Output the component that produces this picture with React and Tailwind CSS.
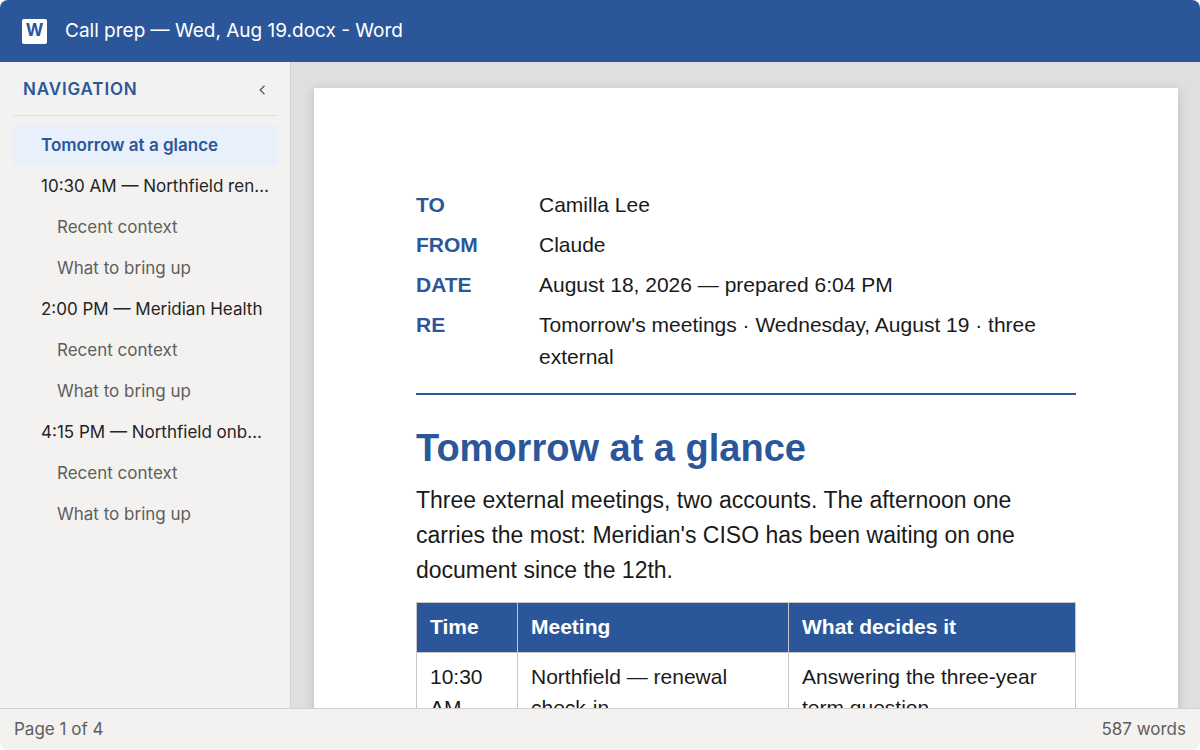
import React from "react";

const outline = [
  { id: "glance", level: 1, label: "Tomorrow at a glance" },
  { id: "renewal", level: 1, label: "10:30 AM — Northfield renewal check-in" },
  { id: "renewal-context", level: 2, label: "Recent context" },
  { id: "renewal-bring", level: 2, label: "What to bring up" },
  { id: "meridian", level: 1, label: "2:00 PM — Meridian Health" },
  { id: "meridian-context", level: 2, label: "Recent context" },
  { id: "meridian-bring", level: 2, label: "What to bring up" },
  { id: "onboarding", level: 1, label: "4:15 PM — Northfield onboarding" },
  { id: "onboarding-context", level: 2, label: "Recent context" },
  { id: "onboarding-bring", level: 2, label: "What to bring up" },
];

const memo = [
  ["TO", "Camilla Lee"],
  ["FROM", "Claude"],
  ["DATE", "August 18, 2026 — prepared 6:04 PM"],
  ["RE", "Tomorrow's meetings · Wednesday, August 19 · three external"],
];

const meetings = [
  ["10:30 AM", "Northfield — renewal check-in", "Answering the three-year term question"],
];

const TitleBar = () => (
  <header className="flex h-[62px] shrink-0 items-center gap-[18px] bg-[#2b579a] px-[22px] text-white">
    <span className="flex size-[25px] items-center justify-center rounded-xs bg-white text-[17px] font-bold text-[#2b579a]">
      W
    </span>
    <h1 className="text-[19px] leading-8">Call prep — Wed, Aug 19.docx - Word</h1>
  </header>
);

const NavItem = ({ item, active }) => {
  const tone = active
    ? "bg-[#e8f0fb] pl-7 font-semibold text-[#2b579a]"
    : item.level === 1
      ? "pl-7 text-[#252423]"
      : "pl-11 text-[#605e5c]";

  return (
    <li>
      <a href={`#${item.id}`} className={`block h-10 truncate pr-1.5 text-[17px] leading-10 ${tone}`}>
        {item.label}
      </a>
    </li>
  );
};

const Sidebar = () => (
  <nav
    aria-label="Navigation"
    className="w-[291px] shrink-0 overflow-hidden border-r border-[#d2d0ce] bg-[#f3f2f1] px-[13px]"
  >
    <div className="flex h-[54px] items-center justify-between border-b border-[#e1dfdd] px-[10px] pt-[3px]">
      <h2 className="text-[17px] font-semibold tracking-wider text-[#2b579a]">NAVIGATION</h2>
      <button type="button" aria-label="Collapse navigation" className="text-[#605e5c]">
        <svg width="10" height="12" viewBox="0 0 10 12" fill="none" stroke="currentColor" strokeWidth="1.4">
          <path d="M7.5 1.8 3.2 6l4.3 4.2" />
        </svg>
      </button>
    </div>
    <ul className="mt-[9px] flex flex-col gap-px">
      {outline.map((item) => (
        <NavItem key={item.id} item={item} active={item.id === "glance"} />
      ))}
    </ul>
  </nav>
);

const MeetingTable = () => (
  <table className="mt-[14px] w-full table-fixed border-collapse text-left text-[21px] leading-[31px]">
    <colgroup>
      <col className="w-[101px]" />
      <col className="w-[271px]" />
      <col />
    </colgroup>
    <thead>
      <tr className="bg-[#2b579a] text-white">
        {["Time", "Meeting", "What decides it"].map((title) => (
          <th key={title} className="border border-[#c8c6c4] px-[13px] pt-2 pb-[10px] font-bold">
            {title}
          </th>
        ))}
      </tr>
    </thead>
    <tbody>
      {meetings.map((row) => (
        <tr key={row[0]} className="align-top">
          {row.map((cell) => (
            <td key={cell} className="border border-[#c8c6c4] px-[13px] py-2">
              {cell}
            </td>
          ))}
        </tr>
      ))}
    </tbody>
  </table>
);

const DocumentPage = () => (
  <article className="min-h-full bg-white px-[102px] pt-[101px] pb-24 font-['Liberation_Sans',Arial,sans-serif] text-[#1a1a1a] shadow-[0_2px_10px_rgba(0,0,0,0.16)]">
    <dl className="grid grid-cols-[123px_1fr] gap-y-2 border-b-2 border-[#2b579a] pb-5 text-[21px] leading-8">
      {memo.map(([term, value]) => (
        <React.Fragment key={term}>
          <dt className="font-bold text-[#2b579a]">{term}</dt>
          <dd>{value}</dd>
        </React.Fragment>
      ))}
    </dl>
    <h2 id="glance" className="mt-7 text-[38px] leading-[50px] font-bold text-[#2b579a]">
      Tomorrow at a glance
    </h2>
    <p className="mt-[10px] text-[23px] leading-[35px]">
      Three external meetings, two accounts. The afternoon one carries the most: Meridian's CISO has been
      waiting on one document since the 12th.
    </p>
    <MeetingTable />
  </article>
);

const StatusBar = () => (
  <footer className="flex h-[42px] shrink-0 items-center justify-between border-t border-[#d2d0ce] bg-[#f3f2f1] px-[14px] text-[17px] text-[#605e5c]">
    <span>Page 1 of 4</span>
    <span>587 words</span>
  </footer>
);

export default function App() {
  return (
    <div className="h-screen bg-white">
      <div className="flex h-full flex-col overflow-hidden rounded-lg font-[Inter,sans-serif]">
        <TitleBar />
        <div className="flex min-h-0 flex-1">
          <Sidebar />
          <main className="min-w-0 flex-1 overflow-hidden bg-[#e1dfdd] pt-[26px] pr-[22px] pl-[23px]">
            <DocumentPage />
          </main>
        </div>
        <StatusBar />
      </div>
    </div>
  );
}
